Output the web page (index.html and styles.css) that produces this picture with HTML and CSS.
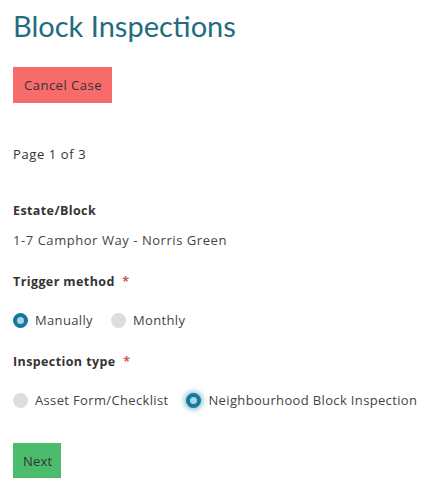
FILE: index.html
```html
<!DOCTYPE html>
<html>
<head>
<meta charset="utf-8">
<link rel="stylesheet" href="styles.css">
</head>
<body>
<div class="page">
  <h1 class="title">Block Inspections</h1>
  <button class="btn btn-cancel">Cancel Case</button>
  <p class="pager">Page 1 of 3</p>
  <div class="field">
    <div class="label">Estate/Block</div>
    <div class="value">1-7 Camphor Way - Norris Green</div>
  </div>
  <div class="field">
    <div class="label">Trigger method <span class="req">*</span></div>
    <div class="radios">
      <label class="radio"><span class="dot checked"></span>Manually</label>
      <label class="radio"><span class="dot"></span>Monthly</label>
    </div>
  </div>
  <div class="field">
    <div class="label">Inspection type <span class="req">*</span></div>
    <div class="radios">
      <label class="radio"><span class="dot"></span>Asset Form/Checklist</label>
      <label class="radio"><span class="dot checked focus"></span>Neighbourhood Block Inspection</label>
    </div>
  </div>
  <button class="btn btn-next">Next</button>
</div>
</body>
</html>
```

FILE: styles.css
```css
* { box-sizing: border-box; }
body {
  margin: 0;
  background: #fff;
  font-family: "Open Sans", Lato, sans-serif;
  color: #333;
}
.page {
  padding: 8px 13px 0 13px;
  display: flex;
  flex-direction: column;
  align-items: flex-start;
}
.title {
  margin: 0;
  font-family: Lato, sans-serif;
  font-size: 29px;
  font-weight: 400;
  color: #236c80;
  line-height: 36px;
}
.btn {
  border: none;
  font-family: inherit;
  font-size: 13px;
  letter-spacing: 0.5px;
  color: #333;
  padding: 0 10px 0 11px;
  height: 36px;
}
.btn-cancel {
  margin-top: 23px;
  background: #f86b6b;
}
.pager {
  margin: 42px 0 0;
  font-size: 13px;
  letter-spacing: 0.6px;
  line-height: 18px;
}
.field {
  margin-top: 39px;
}
.field + .field { margin-top: 24px; }
.label {
  font-size: 12.5px;
  font-weight: 700;
  letter-spacing: 0.4px;
  line-height: 18px;
  color: #333;
}
.req { color: #d9534f; margin-left: 4px; }
.value {
  margin-top: 11px;
  font-size: 13px;
  letter-spacing: 0.55px;
  line-height: 18px;
  color: #444;
}
.radios {
  margin-top: 20px;
  display: flex;
  gap: 18px;
  white-space: nowrap;
}
.radio {
  display: flex;
  align-items: center;
  gap: 7px;
  font-size: 13px;
  letter-spacing: 0.35px;
  line-height: 18px;
  color: #444;
}
.dot {
  width: 15px;
  height: 15px;
  border-radius: 50%;
  background: #ddd;
  flex: none;
}
.dot.checked {
  background: #a9d5e3;
  border: 4px solid #127a9c;
}
.dot.focus {
  box-shadow: 0 0 5px 2px rgba(18, 122, 156, 0.45);
}
.btn-next {
  margin-top: 34px;
  background: #4bbb6c;
  height: 35px;
  padding: 0 9px 0 10px;
  letter-spacing: 0.2px;
}
```
